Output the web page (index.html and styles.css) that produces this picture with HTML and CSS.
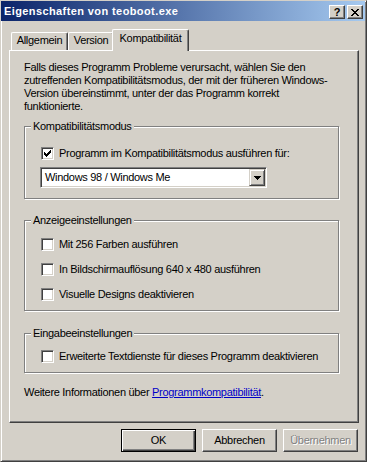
FILE: index.html
```html
<!DOCTYPE html>
<html lang="de">
<head>
    <meta charset="UTF-8">
    <title>Eigenschaften von teoboot.exe</title>
    <link rel="stylesheet" href="styles.css">
</head>
<body>
<div class="window">
    <div class="titlebar">
        <span class="title">Eigenschaften von teoboot.exe</span>
        <div class="caption-buttons">
            <span class="cap-btn help">?</span>
            <span class="cap-btn close">
                <svg width="8" height="7" viewBox="0 0 8 7" shape-rendering="crispEdges"><path d="M0 0h2v1h-2z M6 0h2v1h-2z M1 1h2v1h-2z M5 1h2v1h-2z M2 2h4v1h-4z M3 3h2v1h-2z M2 4h4v1h-4z M1 5h2v1h-2z M5 5h2v1h-2z M0 6h2v1h-2z M6 6h2v1h-2z" fill="#000"/></svg>
            </span>
        </div>
    </div>
    <div class="content">
        <div class="tabs">
            <div class="tab tab-general">Allgemein</div>
            <div class="tab tab-version">Version</div>
            <div class="tab tab-compat active">Kompatibilität</div>
        </div>
        <div class="panel">
            <p class="intro">Falls dieses Programm Probleme verursacht, wählen Sie den<br>zutreffenden Kompatibilitätsmodus, der mit der früheren Windows-<br>Version übereinstimmt, unter der das Programm korrekt<br>funktionierte.</p>

            <div class="group group-compat">
                <div class="legend">Kompatibilitätsmodus</div>
                <div class="check">
                    <span class="box">
                        <svg width="7" height="7" viewBox="0 0 7 7" shape-rendering="crispEdges"><path d="M0 2h1v3h-1z M1 3h1v3h-1z M2 4h1v3h-1z M3 3h1v3h-1z M4 2h1v3h-1z M5 1h1v3h-1z M6 0h1v3h-1z" fill="#000"/></svg>
                    </span>
                    <span class="check-label">Programm im Kompatibilitätsmodus ausführen für:</span>
                </div>
                <div class="combo">
                    <span class="combo-text">Windows 98 / Windows Me</span>
                    <span class="combo-btn">
                        <svg width="7" height="4" viewBox="0 0 7 4" shape-rendering="crispEdges"><path d="M0 0h7v1h-1v1h-1v1h-1v1h-1v-1h-1v-1h-1v-1h-1z" fill="#000"/></svg>
                    </span>
                </div>
            </div>

            <div class="group group-display">
                <div class="legend">Anzeigeeinstellungen</div>
                <div class="check">
                    <span class="box"></span>
                    <span class="check-label">Mit 256 Farben ausführen</span>
                </div>
                <div class="check">
                    <span class="box"></span>
                    <span class="check-label">In Bildschirmauflösung 640 x 480 ausführen</span>
                </div>
                <div class="check">
                    <span class="box"></span>
                    <span class="check-label">Visuelle Designs deaktivieren</span>
                </div>
            </div>

            <div class="group group-input">
                <div class="legend">Eingabeeinstellungen</div>
                <div class="check">
                    <span class="box"></span>
                    <span class="check-label">Erweiterte Textdienste für dieses Programm deaktivieren</span>
                </div>
            </div>

            <p class="more">Weitere Informationen über <a href="#">Programmkompatibilität</a>.</p>
        </div>
        <div class="buttons">
            <span class="btn default">OK</span>
            <span class="btn">Abbrechen</span>
            <span class="btn disabled">Übernehmen</span>
        </div>
    </div>
</div>
</body>
</html>
```

FILE: styles.css
```css
html, body {
    margin: 0;
    padding: 0;
}
body {
    background: #D4D0C8;
    font-family: "Liberation Sans", Arial, sans-serif;
    font-size: 11px;
    line-height: 13px;
    letter-spacing: -0.3px;
    color: #000;
}
.window {
    width: 367px;
    height: 462px;
    box-sizing: border-box;
    background: #D4D0C8;
    border: 1px solid;
    border-color: #D4D0C8 #404040 #404040 #D4D0C8;
    box-shadow: inset 1px 1px 0 #FFF, inset -1px -1px 0 #808080;
}
.titlebar {
    height: 20px;
    margin-right: 1px;
    display: flex;
    align-items: center;
    justify-content: space-between;
    padding: 0 2px 0 3px;
    background: linear-gradient(to right, #0A246A, #A6CAF0);
}
.title {
    color: #FFF;
    font-weight: bold;
    letter-spacing: 0.4px;
    padding-top: 1px;
}
.caption-buttons {
    display: flex;
    gap: 2px;
    padding-top: 2px;
}
.cap-btn {
    width: 16px;
    height: 14px;
    box-sizing: border-box;
    display: flex;
    align-items: center;
    justify-content: center;
    background: #D4D0C8;
    border: 1px solid;
    border-color: #FFF #404040 #404040 #FFF;
    box-shadow: inset -1px -1px 0 #808080;
}
.cap-btn.help {
    font-weight: bold;
    font-size: 11px;
    line-height: 12px;
    letter-spacing: 0;
}
.content {
    padding: 8px 0 0 8px;
}
.tabs {
    display: flex;
    align-items: flex-end;
    height: 21px;
    padding-left: 2px;
}
.tab {
    height: 18px;
    box-sizing: border-box;
    padding-top: 1px;
    text-align: center;
    background: #D4D0C8;
    border-top: 1px solid #FFF;
    border-left: 1px solid #FFF;
    border-right: 1px solid #404040;
    border-radius: 2px 2px 0 0;
    box-shadow: inset -1px 0 0 #808080;
}
.tab-general {
    width: 57px;
}
.tab-version {
    width: 46px;
}
.tab-compat {
    width: 73px;
}
.tab.active {
    position: relative;
    z-index: 1;
    width: 77px;
    height: 22px;
    padding-top: 2px;
    margin: 0 -2px -1px;
}
.panel {
    width: 350px;
    height: 373px;
    box-sizing: border-box;
    padding: 0 14px;
    border: 1px solid;
    border-color: #FFF #404040 #404040 #FFF;
    box-shadow: inset -1px -1px 0 #808080;
}
.intro {
    margin: 10px 0 0;
    white-space: nowrap;
}
.group {
    position: relative;
    width: 315px;
    box-sizing: border-box;
    border: 1px solid #808080;
    box-shadow: inset 1px 1px 0 #FFF, 1px 1px 0 #FFF;
    padding-left: 16px;
}
.legend {
    position: absolute;
    top: -7px;
    left: 6px;
    padding: 0 2px;
    background: #D4D0C8;
}
.group-compat {
    margin-top: 13px;
    padding-top: 20px;
    padding-bottom: 10px;
}
.group-display {
    margin-top: 21px;
    padding-top: 17px;
    padding-bottom: 9px;
    display: flex;
    flex-direction: column;
    gap: 12px;
}
.group-input {
    margin-top: 22px;
    padding-top: 16px;
    padding-bottom: 9px;
}
.check {
    display: flex;
    align-items: center;
    height: 13px;
}
.box {
    width: 13px;
    height: 13px;
    box-sizing: border-box;
    display: flex;
    align-items: center;
    justify-content: center;
    background: #FFF;
    border: 1px solid;
    border-color: #808080 #FFF #FFF #808080;
    box-shadow: inset 1px 1px 0 #404040, inset -1px -1px 0 #D4D0C8;
}
.check-label {
    margin-left: 5px;
}
.combo {
    display: flex;
    align-items: center;
    justify-content: space-between;
    width: 227px;
    height: 21px;
    margin-top: 7px;
    margin-left: -1px;
    box-sizing: border-box;
    padding: 1px;
    background: #FFF;
    border: 1px solid;
    border-color: #808080 #FFF #FFF #808080;
    box-shadow: inset 1px 1px 0 #404040, inset -1px -1px 0 #D4D0C8;
}
.combo-text {
    padding-left: 3px;
}
.combo-btn {
    width: 16px;
    height: 17px;
    box-sizing: border-box;
    display: flex;
    align-items: center;
    justify-content: center;
    background: #D4D0C8;
    border: 1px solid;
    border-color: #D4D0C8 #404040 #404040 #D4D0C8;
    box-shadow: inset 1px 1px 0 #FFF, inset -1px -1px 0 #808080;
}
.more {
    margin: 13px 0 0;
}
.more a {
    color: #0000C8;
}
.buttons {
    display: flex;
    justify-content: flex-end;
    gap: 6px;
    width: 349px;
    margin-top: 6px;
}
.btn {
    width: 75px;
    height: 23px;
    box-sizing: border-box;
    display: flex;
    align-items: center;
    justify-content: center;
    background: #D4D0C8;
    border: 1px solid;
    border-color: #FFF #404040 #404040 #FFF;
    box-shadow: inset -1px -1px 0 #808080;
}
.btn.default {
    border-color: #000;
    box-shadow: inset 1px 1px 0 #FFF, inset -1px -1px 0 #404040, inset -2px -2px 0 #808080;
}
.btn.disabled {
    color: #808080;
    text-shadow: 1px 1px 0 #FFF;
}
```
